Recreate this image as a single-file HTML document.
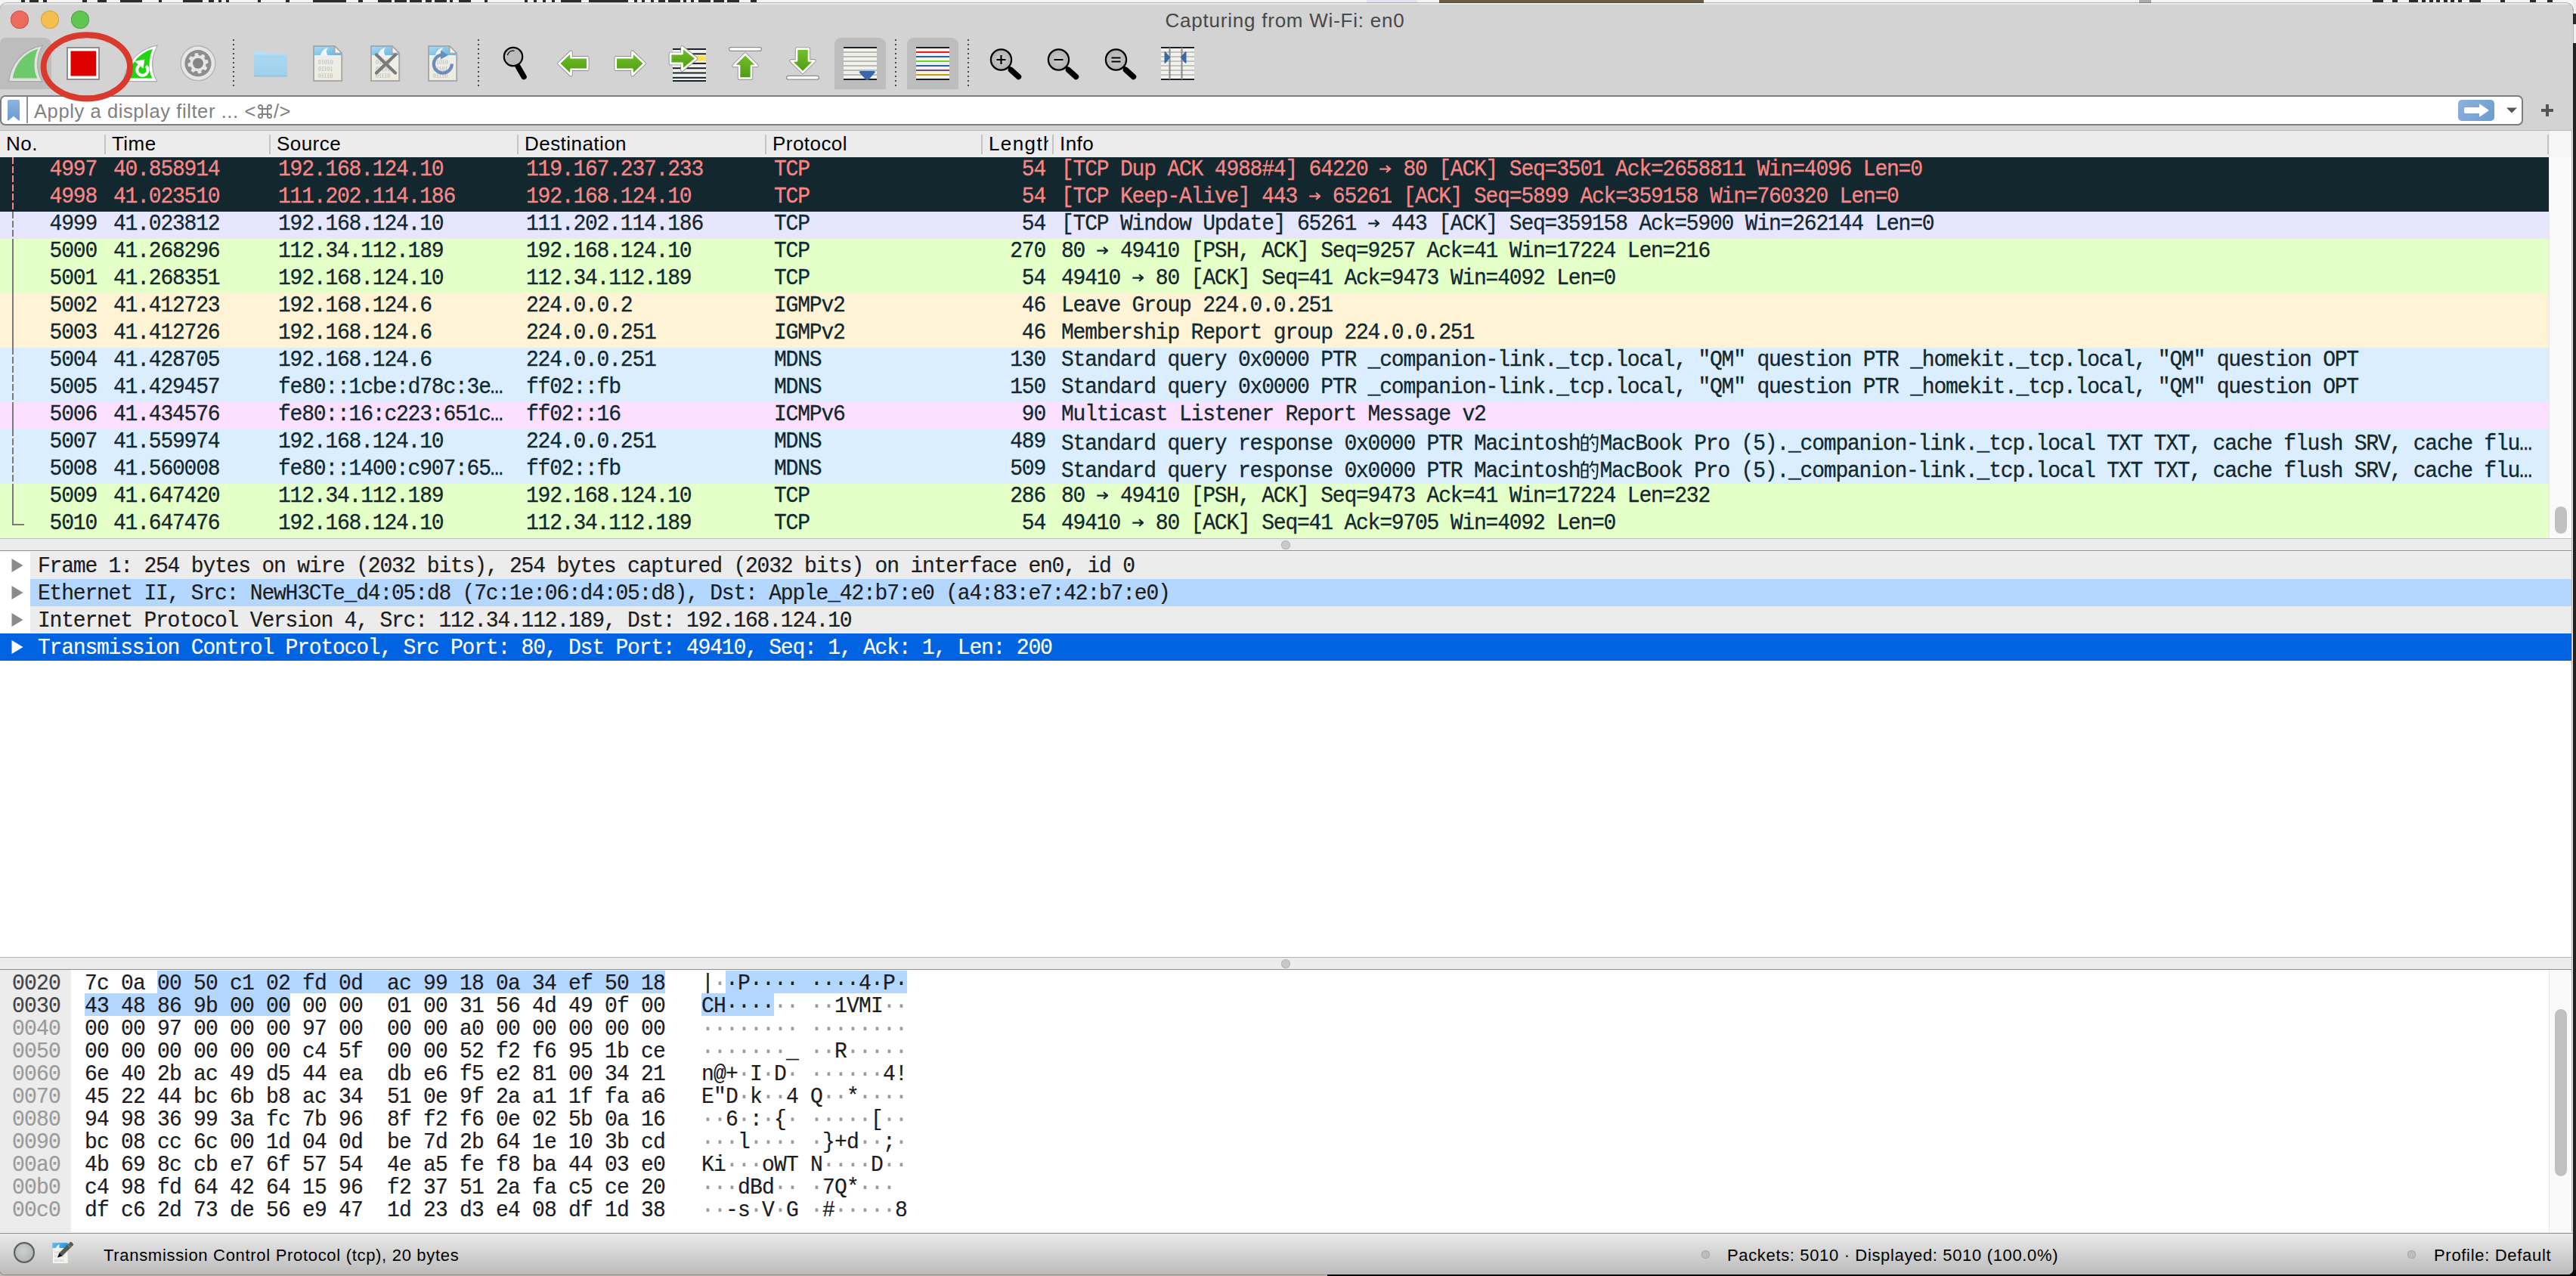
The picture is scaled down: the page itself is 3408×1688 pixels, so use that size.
<!DOCTYPE html>
<html><head><meta charset="utf-8"><title>Capturing from Wi-Fi: en0</title>
<style>
*{margin:0;padding:0;box-sizing:border-box}
html,body{width:3408px;height:1688px;overflow:hidden;background:#232323;font-family:"Liberation Sans",sans-serif}
#top{position:absolute;left:0;top:0;width:3408px;height:12px;background:#f4f4f4}
#top b{position:absolute;top:0;height:3px;background:#2a2a2a}
#rstrip{position:absolute;left:3404px;top:0;width:4px;height:57px;background:#efefef}#rstrip i{position:absolute;left:0;top:18px;width:4px;height:14px;background:#2a2a2a}
#win{position:absolute;left:0;top:4px;width:3404px;height:1682px;border-radius:9px 10px 7px 6px;background:#d3d3d3;overflow:hidden;box-shadow:0 0 0 1px rgba(0,0,0,.25)}
#win:before{content:'';position:absolute;left:0;top:0;width:100%;height:1.500px;background:#e9e9e9;z-index:9}
.pr{-webkit-text-stroke:.3px currentColor}.dr,.hr{-webkit-text-stroke:.2px currentColor}
.abs{position:absolute}
#title{position:absolute;left:-2px;width:3404px;top:7px;text-align:center;font-size:26px;line-height:32px;color:#484848;letter-spacing:.77px}
.tl{position:absolute;top:10px;width:24px;height:24px;border-radius:50%}
/* filter */
#filter{position:absolute;left:0;top:122px;width:3338px;height:40px;border:2px solid #7d7d7d;border-radius:7px;background:#fff}
#filter .ph{position:absolute;left:43px;top:4px;font-size:25.500px;line-height:30px;color:#808080;white-space:nowrap;letter-spacing:.6px}
#filter .vs{position:absolute;left:33px;top:0;width:2px;height:34.500px;background:#8f8f96}
/* header */
#hdr{position:absolute;left:0;top:168px;width:3404px;height:36px;background:#ececec;border-top:1px solid #b9b9b9}
#hdr span{position:absolute;top:2px;font-size:26px;line-height:30px;color:#000;white-space:nowrap;letter-spacing:.45px}
#hdr i{position:absolute;top:5px;width:2px;height:26px;background:#c4c4c4}
/* packet list */
#plist{position:absolute;left:0;top:0;width:3372px;height:1682px;font-family:"Liberation Mono",monospace;font-size:28px;letter-spacing:-1.203px}
.pr{position:absolute;left:0;width:3372px;height:36px;color:#12272e;white-space:pre;margin-top:-4px}
.pr .c{position:absolute;top:-.7px;height:36px;line-height:36px;transform:scaleY(1.055);transform-origin:0 25.450px}
.pr .c.low{top:2.400px}
.pr .r{text-align:right}
.bad{background:#12272e;color:#f78787}
.tcp{background:#e7e6ff}.grn{background:#e4ffc7}.igmp{background:#fff3d6}.udp{background:#daeeff}.icmp6{background:#fce0ff}
.cjk{display:inline-block;vertical-align:-4px;margin:0 0 0 0}
.arw{display:inline-block;vertical-align:2px}
.sb{position:absolute;left:3372px;width:30px;background:#fafafa;border-left:1.500px solid #e8e8e8}
.thumb{position:absolute;left:3380px;width:16px;border-radius:8px;background:#c1c1c1}
.split{position:absolute;left:0;width:3404px;height:17px;background:#ececec;border-top:1px solid #bdbdbd;border-bottom:1px solid #8e8e8e}
.split i{position:absolute;left:1695px;top:2px;width:12px;height:12px;border-radius:50%;background:#c9c9c9;box-shadow:inset 0 0 0 1px #b4b4b4}
/* details */
#det{position:absolute;left:0;top:725px;width:3402px;height:538px;background:#fff}
.dr{position:absolute;left:0;width:3402px;height:36px;margin-top:-4px;font-family:"Liberation Mono",monospace;font-size:28px;letter-spacing:-1.203px;color:#1c1c1c;white-space:pre}
.dr .bg{position:absolute;left:40px;top:0;right:0;height:36px}
.dr.g .bg{background:#ececec}.dr.b .bg{background:#b3d7ff}.dr.s .bg{left:0;background:#0063e1}
.dr.s{color:#fff}
.dr .t{position:absolute;left:50px;top:1.600px;line-height:36px;transform:scaleY(1.055);transform-origin:0 25.450px}
.dr .tri{position:absolute;left:15px;top:8px;fill:#8a8a8a}
.dr.s .tri{fill:#fff}
/* hex */
#hex{position:absolute;left:0;top:1279px;width:3372px;height:347px;background:#fff}
#hexoff{position:absolute;left:0;top:1279px;width:94px;height:347px;background:#ececec}
.hr{position:absolute;left:0;width:3373px;height:30px;margin-top:-4px;font-family:"Liberation Mono",monospace;font-size:28px;letter-spacing:-0.803px;color:#1c1c1c;white-space:pre;line-height:30px}
.hr span{position:absolute;top:2.500px;transform:scaleY(1.055);transform-origin:0 22.450px}
.hr .off{left:16px;color:#9a9a9a}.hr .off.on{color:#454545}
.hr .hx{left:112px}.hr .as{left:928px}
.hr .as i{font-style:normal;color:#9a9a9a}
.hr .hl{position:absolute;top:0;height:30px;background:#b3d7ff}
/* status */
#status{position:absolute;left:0;top:1626px;width:3404px;height:56px;border-top:1.500px solid #f2f2f2;background:linear-gradient(#8c8c8c 0,#8c8c8c 1.500px,#e9e9e9 1.500px,#dcdcdc 30%,#c4c4c4 80%,#b9b9b9)}
#status span{position:absolute;top:16.500px;font-size:22px;line-height:26px;color:#000;white-space:nowrap;letter-spacing:.69px}
#status .dot{position:absolute;top:23px;width:11px;height:11px;border-radius:50%;background:#bdbdbd;box-shadow:inset 0 0 0 1px #a8a8a8}
.tb{position:absolute;overflow:visible}
.sel{position:absolute;top:46px;height:68px;border-radius:9px 9px 0 0;background:#bdbdbd}
.sep{position:absolute;top:48px;width:2px;height:63px;background:repeating-linear-gradient(#4a4a4a 0 2px,transparent 2px 6px)}
</style></head><body>
<div id="top">
<b style="left:28px;width:5px"></b><b style="left:39px;width:12px"></b><b style="left:57px;width:5px"></b><b style="left:109px;width:6px"></b><b style="left:129px;width:12px"></b><b style="left:159px;width:29px"></b><b style="left:210px;width:4px"></b><b style="left:242px;width:26px"></b><b style="left:276px;width:7px"></b><b style="left:289px;width:4px"></b><b style="left:299px;width:4px"></b><b style="left:341px;width:4px"></b><b style="left:378px;width:5px"></b><b style="left:414px;width:44px"></b><b style="left:474px;width:6px"></b><b style="left:500px;width:18px"></b><b style="left:522px;width:16px"></b><b style="left:542px;width:16px"></b><b style="left:563px;width:8px"></b><b style="left:575px;width:16px"></b><b style="left:595px;width:4px"></b><b style="left:607px;width:16px"></b><b style="left:641px;width:4px"></b><b style="left:694px;width:4px"></b><b style="left:706px;width:4px"></b><b style="left:718px;width:4px"></b><b style="left:730px;width:4px"></b><b style="left:742px;width:27px"></b><b style="left:779px;width:52px"></b><b style="left:839px;width:4px"></b><b style="left:849px;width:4px"></b><b style="left:861px;width:4px"></b><b style="left:871px;width:9px"></b><b style="left:884px;width:16px"></b><b style="left:904px;width:4px"></b><b style="left:914px;width:4px"></b><b style="left:924px;width:16px"></b><b style="left:944px;width:14px"></b><b style="left:962px;width:16px"></b><b style="left:993px;width:8px"></b><b style="left:3139px;width:14px"></b><b style="left:3165px;width:7px"></b><b style="left:3187px;width:12px"></b><b style="left:3204px;width:5px"></b><b style="left:3214px;width:5px"></b><b style="left:3223px;width:5px"></b><b style="left:3233px;width:5px"></b><b style="left:3242px;width:5px"></b><b style="left:3252px;width:5px"></b><b style="left:3267px;width:15px"></b><b style="left:3308px;width:6px"></b><b style="left:3347px;width:8px"></b><b style="left:3370px;width:7px"></b><b style="left:1808px;width:67px;background:#e4e4f2;height:4px"></b><b style="left:1904px;width:350px;background:#6b5d45;height:4px"></b><b style="left:2830px;width:16px;background:#aaa;height:4px"></b>
</div>
<div id="rstrip"><i></i></div>
<div class="abs" style="left:0;top:1680px;width:1756px;height:8px;background:#bcbab0"></div><div class="abs" style="left:1756px;top:1680px;width:1652px;height:8px;background:#060606"></div>
<div id="win">
<div id="title">Capturing from Wi-Fi: en0</div>
<div class="tl" style="left:14px;background:#ec6a5e;box-shadow:inset 0 0 0 1px #d5524a"></div>
<div class="tl" style="left:54px;background:#f4bf4f;box-shadow:inset 0 0 0 1px #d8a13a"></div>
<div class="tl" style="left:94px;background:#61c554;box-shadow:inset 0 0 0 1px #4ba93f"></div>
<svg width="0" height="0" style="position:absolute"><defs>
<linearGradient id="gG" x1="0" y1="0" x2="0" y2="1"><stop offset="0" stop-color="#74c02c"/><stop offset="1" stop-color="#4c9c10"/></linearGradient>
<linearGradient id="gB" x1="0" y1="0" x2="1" y2="1"><stop offset="0" stop-color="#a9d9f1"/><stop offset="1" stop-color="#63b3e0"/></linearGradient>
<linearGradient id="gP" x1="0" y1="0" x2="0" y2="1"><stop offset="0" stop-color="#f0f0f0"/><stop offset="1" stop-color="#ecebde"/></linearGradient>
<radialGradient id="gL" cx=".5" cy=".5" r=".6"><stop offset="0" stop-color="#cfcfcf"/><stop offset="1" stop-color="#a9a9a9"/></radialGradient>
<linearGradient id="gF" x1="0" y1="0" x2="0" y2="1"><stop offset="0" stop-color="#a9d7f0"/><stop offset="1" stop-color="#9fd0ec"/></linearGradient>
</defs></svg>
<div class="sel" style="left:0;width:68px;border-radius:7px 9px 0 0"></div>
<div class="sel" style="left:1104px;width:68px"></div>
<div class="sel" style="left:1200px;width:68px"></div>
<div class="sep" style="left:308px"></div>
<div class="sep" style="left:632px"></div>
<div class="sep" style="left:1184px"></div>
<div class="sep" style="left:1280px"></div>
<svg class="tb" style="left:10px;top:56px" width="48" height="48" viewBox="0 0 48 48"><path d="M1.600 47.700 C4 26 19 5 46.400 .1 C38.500 14 36.500 33 46 47.700Z" fill="#e2e2e2" stroke="#a9a9a9" stroke-width="1.200"/><path d="M6.900 43.500 C9.500 26 21 10.500 40 4.700 C35 16 33.500 32 39.400 43.500Z" fill="#6dc96a"/></svg>
<svg class="tb" style="left:86px;top:56px" width="48" height="48" viewBox="0 0 48 48"><rect x="3" y="3" width="42" height="42" fill="#fff" stroke="#8f8f8f" stroke-width="2"/><rect x="7.500" y="7.500" width="33.500" height="33" fill="#dc0000"/></svg>
<svg class="tb" style="left:162px;top:56px" width="48" height="48" viewBox="0 0 48 48"><path d="M1.600 47.700 C4 26 19 5 46.400 .1 C38.500 14 36.500 33 46 47.700Z" fill="#fff" stroke="#9a9a9a" stroke-width="1"/><path d="M6.900 43.500 C9.500 26 21 10.500 40 4.700 C35 16 33.500 32 39.400 43.500Z" fill="#1fd611"/><path d="M31.200 27.150A7.200 7.200 0 1 1 22.270 26.600" fill="none" stroke="#fff" stroke-width="4"/><path d="M15.900 20.900 29.300 18.400 27.500 30.800Z" fill="#fff"/></svg>
<svg class="tb" style="left:238px;top:56px" width="48" height="48" viewBox="0 0 48 48"><circle cx="24" cy="23.700" r="22.900" fill="#e6e6e6" stroke="#b4b4b4" stroke-width="1.400"/><circle cx="24" cy="23.700" r="17.600" fill="#8d8d8d"/><path d="M36.98 19.33 37.70 23.36 34.56 24.60 33.95 27.34 36.27 29.79 33.92 33.15 30.83 31.81 28.46 33.31 28.37 36.68 24.34 37.40 23.10 34.26 20.36 33.65 17.91 35.97 14.55 33.62 15.89 30.53 14.39 28.16 11.02 28.07 10.30 24.04 13.44 22.80 14.05 20.06 11.73 17.61 14.08 14.25 17.17 15.59 19.54 14.09 19.63 10.72 23.66 10.00 24.90 13.14 27.64 13.75 30.09 11.43 33.45 13.78 32.11 16.87 33.61 19.24Z" fill="#e6e6e6"/><circle cx="24" cy="23.700" r="7" fill="#868686"/></svg>
<svg class="tb" style="left:334px;top:55.5px" width="48" height="48" viewBox="0 0 48 48"><path d="M2 9.500q0-2 2-2h11q1.500 0 2 1.500l.8 1.500H44q2 0 2 2V39q0 2-2 2H4q-2 0-2-2z" fill="#b7def3"/><path d="M2 14.500q0-2 2-2h40q2 0 2 2V39.500q0 2-2 2H4q-2 0-2-2z" fill="url(#gF)"/><path d="M2 40.500h44" stroke="#8fc1de" stroke-width="1.500"/></svg>
<svg class="tb" style="left:410px;top:56px" width="48" height="48" viewBox="0 0 48 48"><path d="M5 1H32.800L42.200 10.400V47H5Z" fill="url(#gP)" stroke="#a9a9a9" stroke-width="2" stroke-linejoin="miter"/><path d="M6 2H32.400L41.200 10.800V13H6Z" fill="url(#gB)"/><path d="M14 13C15 8 19 4 24 3 C21.500 6 21.500 10 23.500 13Z" fill="#eef6fb"/><path d="M32.800 1V10.400H42.200Z" fill="#f4f4f2" stroke="#a9a9a9" stroke-width="1.500" stroke-linejoin="round"/><g font-family="Liberation Serif,serif" font-size="7.500" fill="#b2b2b2" letter-spacing=".2"><text x="11" y="24.500">01010</text><text x="11" y="33.500">01101</text><text x="11" y="42.500">01110</text></g></svg>
<svg class="tb" style="left:486px;top:56px" width="48" height="48" viewBox="0 0 48 48"><path d="M5 1H32.800L42.200 10.400V47H5Z" fill="url(#gP)" stroke="#a9a9a9" stroke-width="2" stroke-linejoin="miter"/><path d="M6 2H32.400L41.200 10.800V13H6Z" fill="url(#gB)"/><path d="M14 13C15 8 19 4 24 3 C21.500 6 21.500 10 23.500 13Z" fill="#eef6fb"/><path d="M32.800 1V10.400H42.200Z" fill="#f4f4f2" stroke="#a9a9a9" stroke-width="1.500" stroke-linejoin="round"/><g font-family="Liberation Serif,serif" font-size="7.500" fill="#b2b2b2" letter-spacing=".2"><text x="11" y="24.500">01010</text><text x="11" y="33.500">01101</text><text x="11" y="42.500">01110</text></g><path d="M12 12.500 37 36.500M37 12.500 12 36.500" stroke="#7a7a7a" stroke-width="4.200" stroke-linecap="round"/></svg>
<svg class="tb" style="left:562px;top:56px" width="48" height="48" viewBox="0 0 48 48"><path d="M5 1H32.800L42.200 10.400V47H5Z" fill="url(#gP)" stroke="#a9a9a9" stroke-width="2" stroke-linejoin="miter"/><path d="M6 2H32.400L41.200 10.800V13H6Z" fill="url(#gB)"/><path d="M14 13C15 8 19 4 24 3 C21.500 6 21.500 10 23.500 13Z" fill="#eef6fb"/><path d="M32.800 1V10.400H42.200Z" fill="#f4f4f2" stroke="#a9a9a9" stroke-width="1.500" stroke-linejoin="round"/><g font-family="Liberation Serif,serif" font-size="7.500" fill="#b2b2b2" letter-spacing=".2"><text x="11" y="24.500">01010</text><text x="11" y="33.500">01101</text><text x="11" y="42.500">01110</text></g><path d="M35.800 24.500A12 12 0 1 1 22 12.700" fill="none" stroke="#6c8cbd" stroke-width="4.200"/><path d="M21 6.500 31 13 21 18.500Z" fill="#6c8cbd"/></svg>
<svg class="tb" style="left:658px;top:56px" width="48" height="48" viewBox="0 0 48 48"><circle cx="21" cy="15" r="12.200" fill="#bcbcbc" stroke="#000" stroke-width="2.200"/><path d="M13.500 12.500A8 8 0 0 1 22 7.200" fill="none" stroke="#000" stroke-width="1.300" stroke-linecap="round"/><path d="M27.500 28.500 35 41.500" stroke="#000" stroke-width="7.500" stroke-linecap="round"/><path d="M25.500 25 28 29.500" stroke="#000" stroke-width="3.500"/></svg>
<svg class="tb" style="left:734px;top:56px" width="48" height="48" viewBox="0 0 48 48"><g><path d="M5.500 24 21.500 8.700V16.200H43.300V31.800H21.500V39.300Z" fill="#fff" stroke="#8d8d8d" stroke-width="4.400" stroke-linejoin="round"/><path d="M5.500 24 21.500 8.700V16.200H43.300V31.800H21.500V39.300Z" fill="url(#gG)" stroke="#fff" stroke-width="2.600" stroke-linejoin="round"/></g></svg>
<svg class="tb" style="left:810px;top:56px" width="48" height="48" viewBox="0 0 48 48"><g transform="translate(48 0) scale(-1 1)"><path d="M5.500 24 21.500 8.700V16.200H43.300V31.800H21.500V39.300Z" fill="#fff" stroke="#8d8d8d" stroke-width="4.400" stroke-linejoin="round"/><path d="M5.500 24 21.500 8.700V16.200H43.300V31.800H21.500V39.300Z" fill="url(#gG)" stroke="#fff" stroke-width="2.600" stroke-linejoin="round"/></g></svg>
<svg class="tb" style="left:888px;top:56px" width="48" height="48" viewBox="0 0 48 48"><rect x="2" y="4" width="44" height="44" fill="#f1f1ec"/><rect x="2" y="4" width="44" height="2" fill="#17222a"/><rect x="2" y="10.3" width="44" height="2" fill="#17222a"/><rect x="2" y="16.6" width="44" height="2" fill="#17222a"/><rect x="2" y="22.9" width="44" height="2" fill="#17222a"/><rect x="2" y="29.2" width="44" height="2" fill="#17222a"/><rect x="2" y="35.5" width="44" height="2" fill="#17222a"/><rect x="2" y="41.8" width="44" height="2" fill="#17222a"/><rect x="2" y="46" width="44" height="2" fill="#17222a"/><rect x="30" y="14" width="16" height="6.500" fill="#fbe14f"/><path d="M-1 11H14.500V2.500L33 17.500 14.500 32.500V24H-1Z" fill="#fff" stroke="#8d8d8d" stroke-width="4.600" stroke-linejoin="round"/><path d="M-1 11H14.500V2.500L33 17.500 14.500 32.500V24H-1Z" fill="url(#gG)" stroke="#fff" stroke-width="2.800" stroke-linejoin="round"/></svg>
<svg class="tb" style="left:962px;top:56px" width="48" height="48" viewBox="0 0 48 48"><rect x="2.600" y="2.600" width="42.800" height="4.800" rx="2.400" fill="#fff" stroke="#8d8d8d" stroke-width="1.200"/><path d="M24 11.500 39.500 27H32V43.500H16V27H8.500Z" fill="#fff" stroke="#8d8d8d" stroke-width="4.400" stroke-linejoin="round"/><path d="M24 11.500 39.500 27H32V43.500H16V27H8.500Z" fill="url(#gG)" stroke="#fff" stroke-width="2.600" stroke-linejoin="round"/></svg>
<svg class="tb" style="left:1038px;top:56px" width="48" height="48" viewBox="0 0 48 48"><rect x="2.600" y="40.400" width="42.800" height="4.800" rx="2.400" fill="#fff" stroke="#8d8d8d" stroke-width="1.200"/><path d="M24 35.700 8.500 20.500H16V4.600H32V20.500H39.500Z" fill="#fff" stroke="#8d8d8d" stroke-width="4.400" stroke-linejoin="round"/><path d="M24 35.700 8.500 20.500H16V4.600H32V20.500H39.500Z" fill="url(#gG)" stroke="#fff" stroke-width="2.600" stroke-linejoin="round"/></svg>
<svg class="tb" style="left:1114px;top:56px" width="48" height="48" viewBox="0 0 48 48"><rect x="2" y="2" width="44" height="44" fill="#f1f1ee"/><rect x="2" y="2" width="44" height="2" fill="#17222a"/><rect x="2" y="44" width="44" height="2" fill="#17222a"/><rect x="2" y="8" width="44" height="2" fill="#b9bab2"/><rect x="2" y="14" width="44" height="2" fill="#b9bab2"/><rect x="2" y="20" width="44" height="2" fill="#b9bab2"/><rect x="2" y="26" width="44" height="2" fill="#b9bab2"/><rect x="2" y="32" width="44" height="2" fill="#b9bab2"/><rect x="2" y="38" width="44" height="2" fill="#b9bab2"/><path d="M22.500 35.500q0-1.500 2-1.500h17.500q2 0 2 1.500l-9 10q-1.700 1.500-3.400 0z" fill="#3868a9"/></svg>
<svg class="tb" style="left:1210px;top:56px" width="48" height="48" viewBox="0 0 48 48"><rect x="2" y="2" width="44" height="44" fill="#f1f1ee"/><rect x="2" y="2" width="44" height="2" fill="#17222a"/><rect x="2" y="44" width="44" height="2" fill="#17222a"/><rect x="2" y="8" width="44" height="2" fill="#ee1c1c"/><rect x="2" y="14" width="44" height="2" fill="#2a5db0"/><rect x="2" y="20" width="44" height="2" fill="#6cd41a"/><rect x="2" y="26" width="44" height="2" fill="#2a5db0"/><rect x="2" y="32" width="44" height="2" fill="#76477f"/><rect x="2" y="38" width="44" height="2" fill="#c4a000"/></svg>
<svg class="tb" style="left:1308px;top:56px" width="48" height="48" viewBox="0 0 48 48"><circle cx="16.500" cy="19" r="13.600" fill="url(#gL)" stroke="#000" stroke-width="2.200"/><path d="M10.500 19h12M16.500 13v12" stroke="#000" stroke-width="2.200"/><path d="M29.500 32.500 39.500 41.500" stroke="#000" stroke-width="7.500" stroke-linecap="round"/><path d="M26 28 30 32.500" stroke="#000" stroke-width="3.500"/></svg>
<svg class="tb" style="left:1384px;top:56px" width="48" height="48" viewBox="0 0 48 48"><circle cx="16.500" cy="19" r="13.600" fill="url(#gL)" stroke="#000" stroke-width="2.200"/><path d="M10.500 19h12" stroke="#000" stroke-width="2.200"/><path d="M29.500 32.500 39.500 41.500" stroke="#000" stroke-width="7.500" stroke-linecap="round"/><path d="M26 28 30 32.500" stroke="#000" stroke-width="3.500"/></svg>
<svg class="tb" style="left:1460px;top:56px" width="48" height="48" viewBox="0 0 48 48"><circle cx="16.500" cy="19" r="13.600" fill="url(#gL)" stroke="#000" stroke-width="2.200"/><path d="M10.500 16.500h12M10.500 21.500h12" stroke="#000" stroke-width="2.200"/><path d="M29.500 32.500 39.500 41.500" stroke="#000" stroke-width="7.500" stroke-linecap="round"/><path d="M26 28 30 32.500" stroke="#000" stroke-width="3.500"/></svg>
<svg class="tb" style="left:1534px;top:56px" width="48" height="48" viewBox="0 0 48 48"><rect x="2" y="2" width="44" height="44" fill="#f1f1ee"/><rect x="2" y="8" width="44" height="2" fill="#c3c4bc"/><rect x="2" y="14" width="44" height="2" fill="#c3c4bc"/><rect x="2" y="20" width="44" height="2" fill="#c3c4bc"/><rect x="2" y="26" width="44" height="2" fill="#c3c4bc"/><rect x="2" y="32" width="44" height="2" fill="#c3c4bc"/><rect x="2" y="38" width="44" height="2" fill="#c3c4bc"/><rect x="2" y="2" width="44" height="2" fill="#17222a"/><rect x="2" y="44" width="44" height="2" fill="#17222a"/><rect x="12.500" y="3" width="2" height="42" fill="#8a8b84"/><rect x="28.500" y="3" width="2" height="42" fill="#8a8b84"/><path d="M6.500 9.500q0-2 1.500-1l5.500 6.500q.8 1 0 2L8 23.500q-1.500 1-1.500-1z" fill="#3868a9"/><path d="M35.500 9.500q0-2-1.500-1l-5.500 6.500q-.8 1 0 2L34 23.500q1.500 1 1.500-1z" fill="#3868a9"/></svg>
<svg class="tb" style="left:50px;top:36px;z-index:5" width="130" height="100" viewBox="0 0 130 100"><ellipse cx="64.800" cy="48.300" rx="57.200" ry="42.100" fill="none" stroke="#d93a2b" stroke-width="8"/></svg>
<div id="filter"><svg class="abs" style="left:7px;top:3px" width="18" height="30" viewBox="0 0 18 30"><defs><linearGradient id="bk" x1="0" y1="0" x2="0" y2="1"><stop offset="0" stop-color="#8fb3de"/><stop offset="1" stop-color="#6a9bd2"/></linearGradient></defs><path d="M1 2.500q0-1.500 1.500-1.500h13q1.500 0 1.500 1.500v25q0 1.800-1.400.7l-6.600-5.400-6.600 5.400q-1.400 1.100-1.400-.7z" fill="url(#bk)"/></svg><div class="vs"></div><div class="ph">Apply a display filter ... &lt;<svg style="display:inline-block;vertical-align:-2px;margin:0 1px" width="21" height="21" viewBox="0 0 21 21"><path d="M7 7V4.500A2.500 2.500 0 1 0 4.500 7H16.500A2.500 2.500 0 1 0 14 4.500V16.500A2.500 2.500 0 1 0 16.500 14H4.500A2.500 2.500 0 1 0 7 16.500Z" fill="none" stroke="#808080" stroke-width="1.900"/></svg>/&gt;</div>
<div class="abs" style="left:3250px;top:4px;width:48px;height:28px;border-radius:5px;background:linear-gradient(135deg,#8db2dc,#6c9bd0)"><svg class="abs" style="left:7px;top:5px" width="34" height="18" viewBox="0 0 34 18"><path d="M3 5h18V1.500q0-1.500 1.300-.6L33 8.300q1 .7 0 1.400L22.300 17.100q-1.300.9-1.300-.6V13H3q-2 0-2-2V7q0-2 2-2z" fill="#fff"/></svg></div>
<svg class="abs" style="left:3314px;top:14px" width="14" height="8" viewBox="0 0 14 8"><path d="M0 .5h14l-7 7z" fill="#555"/></svg>
</div>
<svg class="abs" style="left:3362px;top:134px" width="16" height="16" viewBox="0 0 16 16"><path d="M6 0h4v6h6v4h-6v6H6v-6H0V6h6z" fill="#555"/></svg>
<div id="hdr"><span style="left:8px">No.</span><i style="left:138px"></i><span style="left:148px">Time</span><i style="left:356px"></i><span style="left:366px">Source</span><i style="left:684px"></i><span style="left:694px">Destination</span><i style="left:1012px"></i><span style="left:1022px">Protocol</span><i style="left:1298px"></i><span style="left:1308px;width:79px;overflow:hidden;letter-spacing:1.400px">Length</span><i style="left:1392px"></i><span style="left:1402px">Info</span><i style="left:3370px"></i><div class="abs" style="left:3373px;top:0;width:31px;height:35px;background:#f6f6f6"></div></div>
<div id="plist">
<div class="pr bad" style="top:208px"><span class="c r" style="left:0;width:128px">4997</span><span class="c" style="left:150px">40.858914</span><span class="c" style="left:368px">192.168.124.10</span><span class="c" style="left:696px">119.167.237.233</span><span class="c" style="left:1024px">TCP</span><span class="c r" style="left:1283px;width:100px">54</span><span class="c" style="left:1404px">[TCP Dup ACK 4988#4] 64220 <svg class="arw" width="15.6" height="12" viewBox="0 0 15.6 12"><path d="M.3 6H13.500M9 1.800 14.200 6 9 10.200" fill="none" stroke="currentColor" stroke-width="2.100"/></svg> 80 [ACK] Seq=3501 Ack=2658811 Win=4096 Len=0</span></div>
<div class="pr bad" style="top:244px"><span class="c r" style="left:0;width:128px">4998</span><span class="c" style="left:150px">41.023510</span><span class="c" style="left:368px">111.202.114.186</span><span class="c" style="left:696px">192.168.124.10</span><span class="c" style="left:1024px">TCP</span><span class="c r" style="left:1283px;width:100px">54</span><span class="c" style="left:1404px">[TCP Keep-Alive] 443 <svg class="arw" width="15.6" height="12" viewBox="0 0 15.6 12"><path d="M.3 6H13.500M9 1.800 14.200 6 9 10.200" fill="none" stroke="currentColor" stroke-width="2.100"/></svg> 65261 [ACK] Seq=5899 Ack=359158 Win=760320 Len=0</span></div>
<div class="pr tcp" style="top:280px"><span class="c r" style="left:0;width:128px">4999</span><span class="c" style="left:150px">41.023812</span><span class="c" style="left:368px">192.168.124.10</span><span class="c" style="left:696px">111.202.114.186</span><span class="c" style="left:1024px">TCP</span><span class="c r" style="left:1283px;width:100px">54</span><span class="c" style="left:1404px">[TCP Window Update] 65261 <svg class="arw" width="15.6" height="12" viewBox="0 0 15.6 12"><path d="M.3 6H13.500M9 1.800 14.200 6 9 10.200" fill="none" stroke="currentColor" stroke-width="2.100"/></svg> 443 [ACK] Seq=359158 Ack=5900 Win=262144 Len=0</span></div>
<div class="pr grn" style="top:316px"><span class="c r" style="left:0;width:128px">5000</span><span class="c" style="left:150px">41.268296</span><span class="c" style="left:368px">112.34.112.189</span><span class="c" style="left:696px">192.168.124.10</span><span class="c" style="left:1024px">TCP</span><span class="c r" style="left:1283px;width:100px">270</span><span class="c" style="left:1404px">80 <svg class="arw" width="15.6" height="12" viewBox="0 0 15.6 12"><path d="M.3 6H13.500M9 1.800 14.200 6 9 10.200" fill="none" stroke="currentColor" stroke-width="2.100"/></svg> 49410 [PSH, ACK] Seq=9257 Ack=41 Win=17224 Len=216</span></div>
<div class="pr grn" style="top:352px"><span class="c r" style="left:0;width:128px">5001</span><span class="c" style="left:150px">41.268351</span><span class="c" style="left:368px">192.168.124.10</span><span class="c" style="left:696px">112.34.112.189</span><span class="c" style="left:1024px">TCP</span><span class="c r" style="left:1283px;width:100px">54</span><span class="c" style="left:1404px">49410 <svg class="arw" width="15.6" height="12" viewBox="0 0 15.6 12"><path d="M.3 6H13.500M9 1.800 14.200 6 9 10.200" fill="none" stroke="currentColor" stroke-width="2.100"/></svg> 80 [ACK] Seq=41 Ack=9473 Win=4092 Len=0</span></div>
<div class="pr igmp" style="top:388px"><span class="c r" style="left:0;width:128px">5002</span><span class="c" style="left:150px">41.412723</span><span class="c" style="left:368px">192.168.124.6</span><span class="c" style="left:696px">224.0.0.2</span><span class="c" style="left:1024px">IGMPv2</span><span class="c r" style="left:1283px;width:100px">46</span><span class="c" style="left:1404px">Leave Group 224.0.0.251</span></div>
<div class="pr igmp" style="top:424px"><span class="c r" style="left:0;width:128px">5003</span><span class="c" style="left:150px">41.412726</span><span class="c" style="left:368px">192.168.124.6</span><span class="c" style="left:696px">224.0.0.251</span><span class="c" style="left:1024px">IGMPv2</span><span class="c r" style="left:1283px;width:100px">46</span><span class="c" style="left:1404px">Membership Report group 224.0.0.251</span></div>
<div class="pr udp" style="top:460px"><span class="c r" style="left:0;width:128px">5004</span><span class="c" style="left:150px">41.428705</span><span class="c" style="left:368px">192.168.124.6</span><span class="c" style="left:696px">224.0.0.251</span><span class="c" style="left:1024px">MDNS</span><span class="c r" style="left:1283px;width:100px">130</span><span class="c" style="left:1404px">Standard query 0x0000 PTR _companion-link._tcp.local, "QM" question PTR _homekit._tcp.local, "QM" question OPT</span></div>
<div class="pr udp" style="top:496px"><span class="c r" style="left:0;width:128px">5005</span><span class="c" style="left:150px">41.429457</span><span class="c" style="left:368px">fe80::1cbe:d78c:3e…</span><span class="c" style="left:696px">ff02::fb</span><span class="c" style="left:1024px">MDNS</span><span class="c r" style="left:1283px;width:100px">150</span><span class="c" style="left:1404px">Standard query 0x0000 PTR _companion-link._tcp.local, "QM" question PTR _homekit._tcp.local, "QM" question OPT</span></div>
<div class="pr icmp6" style="top:532px"><span class="c r" style="left:0;width:128px">5006</span><span class="c" style="left:150px">41.434576</span><span class="c" style="left:368px">fe80::16:c223:651c…</span><span class="c" style="left:696px">ff02::16</span><span class="c" style="left:1024px">ICMPv6</span><span class="c r" style="left:1283px;width:100px">90</span><span class="c" style="left:1404px">Multicast Listener Report Message v2</span></div>
<div class="pr udp" style="top:568px"><span class="c r" style="left:0;width:128px">5007</span><span class="c" style="left:150px">41.559974</span><span class="c" style="left:368px">192.168.124.10</span><span class="c" style="left:696px">224.0.0.251</span><span class="c" style="left:1024px">MDNS</span><span class="c r" style="left:1283px;width:100px">489</span><span class="c low" style="left:1404px">Standard query response 0x0000 PTR Macintosh<svg class="cjk" width="26" height="26" viewBox="0 0 26 26"><g fill="none" stroke="currentColor" stroke-width="2"><path d="M6 2 4.5 6M2.5 6.500h8v16h-8zM2.500 14h8M17 2q-1 5-4 8M15.500 6.500h8q0 16-2 17.500-1 .8-4-.5M16 12l3 4"/></g></svg>MacBook Pro (5)._companion-link._tcp.local TXT TXT, cache flush SRV, cache flu…</span></div>
<div class="pr udp" style="top:604px"><span class="c r" style="left:0;width:128px">5008</span><span class="c" style="left:150px">41.560008</span><span class="c" style="left:368px">fe80::1400:c907:65…</span><span class="c" style="left:696px">ff02::fb</span><span class="c" style="left:1024px">MDNS</span><span class="c r" style="left:1283px;width:100px">509</span><span class="c low" style="left:1404px">Standard query response 0x0000 PTR Macintosh<svg class="cjk" width="26" height="26" viewBox="0 0 26 26"><g fill="none" stroke="currentColor" stroke-width="2"><path d="M6 2 4.5 6M2.5 6.500h8v16h-8zM2.500 14h8M17 2q-1 5-4 8M15.500 6.500h8q0 16-2 17.500-1 .8-4-.5M16 12l3 4"/></g></svg>MacBook Pro (5)._companion-link._tcp.local TXT TXT, cache flush SRV, cache flu…</span></div>
<div class="pr grn" style="top:640px"><span class="c r" style="left:0;width:128px">5009</span><span class="c" style="left:150px">41.647420</span><span class="c" style="left:368px">112.34.112.189</span><span class="c" style="left:696px">192.168.124.10</span><span class="c" style="left:1024px">TCP</span><span class="c r" style="left:1283px;width:100px">286</span><span class="c" style="left:1404px">80 <svg class="arw" width="15.6" height="12" viewBox="0 0 15.6 12"><path d="M.3 6H13.500M9 1.800 14.200 6 9 10.200" fill="none" stroke="currentColor" stroke-width="2.100"/></svg> 49410 [PSH, ACK] Seq=9473 Ack=41 Win=17224 Len=232</span></div>
<div class="pr grn" style="top:676px"><span class="c r" style="left:0;width:128px">5010</span><span class="c" style="left:150px">41.647476</span><span class="c" style="left:368px">192.168.124.10</span><span class="c" style="left:696px">112.34.112.189</span><span class="c" style="left:1024px">TCP</span><span class="c r" style="left:1283px;width:100px">54</span><span class="c" style="left:1404px">49410 <svg class="arw" width="15.6" height="12" viewBox="0 0 15.6 12"><path d="M.3 6H13.500M9 1.800 14.200 6 9 10.200" fill="none" stroke="currentColor" stroke-width="2.100"/></svg> 80 [ACK] Seq=41 Ack=9705 Win=4092 Len=0</span></div>
</div>
<svg class="abs" style="left:12px;top:204px" width="24" height="504" viewBox="0 0 24 504"><g fill="none" stroke-width="2"><path d="M5 0V72" stroke="#f78787" stroke-dasharray="9 3"/><path d="M5 72V108" stroke="#7a7a7a" stroke-dasharray="9 3"/><path d="M5 108V252" stroke="#7a7a7a"/><path d="M5 252V324" stroke="#7a7a7a" stroke-dasharray="9 3"/><path d="M5 324V360" stroke="#7a7a7a"/><path d="M5 360V432" stroke="#7a7a7a" stroke-dasharray="9 3"/><path d="M5 432V486H20" stroke="#7a7a7a"/></g></svg>
<div class="sb" style="top:204px;height:504px"></div><div class="thumb" style="top:666px;height:36px"></div>
<div class="split" style="top:708px"><i></i></div>
<div id="det">
</div>
<div class="dr g" style="top:730px"><div class="bg"></div><svg class="tri" width="16" height="20" viewBox="0 0 16 20"><path d="M0.500 1 15.500 10 0.500 19z"/></svg><span class="t">Frame 1: 254 bytes on wire (2032 bits), 254 bytes captured (2032 bits) on interface en0, id 0</span></div>
<div class="dr b" style="top:766px"><div class="bg"></div><svg class="tri" width="16" height="20" viewBox="0 0 16 20"><path d="M0.500 1 15.500 10 0.500 19z"/></svg><span class="t">Ethernet II, Src: NewH3CTe_d4:05:d8 (7c:1e:06:d4:05:d8), Dst: Apple_42:b7:e0 (a4:83:e7:42:b7:e0)</span></div>
<div class="dr g" style="top:802px"><div class="bg"></div><svg class="tri" width="16" height="20" viewBox="0 0 16 20"><path d="M0.500 1 15.500 10 0.500 19z"/></svg><span class="t">Internet Protocol Version 4, Src: 112.34.112.189, Dst: 192.168.124.10</span></div>
<div class="dr s" style="top:838px"><div class="bg"></div><svg class="tri" width="16" height="20" viewBox="0 0 16 20"><path d="M0.500 1 15.500 10 0.500 19z"/></svg><span class="t">Transmission Control Protocol, Src Port: 80, Dst Port: 49410, Seq: 1, Ack: 1, Len: 200</span></div>
<div class="split" style="top:1262px;border-top-color:#b4b4b4"><i></i></div>
<div id="hex"></div><div id="hexoff"></div>
<div class="hr" style="top:1284px"><div class="hl" style="left:208px;width:672px"></div><div class="hl" style="left:960px;width:240px"></div><span class="off on">0020</span><span class="hx">7c 0a 00 50 c1 02 fd 0d  ac 99 18 0a 34 ef 50 18</span><span class="as">|<i>·</i>·P···· ····4·P·</span></div>
<div class="hr" style="top:1314px"><div class="hl" style="left:112px;width:272px"></div><div class="hl" style="left:928px;width:96px"></div><span class="off on">0030</span><span class="hx">43 48 86 9b 00 00 00 00  01 00 31 56 4d 49 0f 00</span><span class="as">CH····<i>·</i><i>·</i> <i>·</i><i>·</i>1VMI<i>·</i><i>·</i></span></div>
<div class="hr" style="top:1344px"><span class="off">0040</span><span class="hx">00 00 97 00 00 00 97 00  00 00 a0 00 00 00 00 00</span><span class="as"><i>·</i><i>·</i><i>·</i><i>·</i><i>·</i><i>·</i><i>·</i><i>·</i> <i>·</i><i>·</i><i>·</i><i>·</i><i>·</i><i>·</i><i>·</i><i>·</i></span></div>
<div class="hr" style="top:1374px"><span class="off">0050</span><span class="hx">00 00 00 00 00 00 c4 5f  00 00 52 f2 f6 95 1b ce</span><span class="as"><i>·</i><i>·</i><i>·</i><i>·</i><i>·</i><i>·</i><i>·</i>_ <i>·</i><i>·</i>R<i>·</i><i>·</i><i>·</i><i>·</i><i>·</i></span></div>
<div class="hr" style="top:1404px"><span class="off">0060</span><span class="hx">6e 40 2b ac 49 d5 44 ea  db e6 f5 e2 81 00 34 21</span><span class="as">n@+<i>·</i>I<i>·</i>D<i>·</i> <i>·</i><i>·</i><i>·</i><i>·</i><i>·</i><i>·</i>4!</span></div>
<div class="hr" style="top:1434px"><span class="off">0070</span><span class="hx">45 22 44 bc 6b b8 ac 34  51 0e 9f 2a a1 1f fa a6</span><span class="as">E"D<i>·</i>k<i>·</i><i>·</i>4 Q<i>·</i><i>·</i>*<i>·</i><i>·</i><i>·</i><i>·</i></span></div>
<div class="hr" style="top:1464px"><span class="off">0080</span><span class="hx">94 98 36 99 3a fc 7b 96  8f f2 f6 0e 02 5b 0a 16</span><span class="as"><i>·</i><i>·</i>6<i>·</i>:<i>·</i>{<i>·</i> <i>·</i><i>·</i><i>·</i><i>·</i><i>·</i>[<i>·</i><i>·</i></span></div>
<div class="hr" style="top:1494px"><span class="off">0090</span><span class="hx">bc 08 cc 6c 00 1d 04 0d  be 7d 2b 64 1e 10 3b cd</span><span class="as"><i>·</i><i>·</i><i>·</i>l<i>·</i><i>·</i><i>·</i><i>·</i> <i>·</i>}+d<i>·</i><i>·</i>;<i>·</i></span></div>
<div class="hr" style="top:1524px"><span class="off">00a0</span><span class="hx">4b 69 8c cb e7 6f 57 54  4e a5 fe f8 ba 44 03 e0</span><span class="as">Ki<i>·</i><i>·</i><i>·</i>oWT N<i>·</i><i>·</i><i>·</i><i>·</i>D<i>·</i><i>·</i></span></div>
<div class="hr" style="top:1554px"><span class="off">00b0</span><span class="hx">c4 98 fd 64 42 64 15 96  f2 37 51 2a fa c5 ce 20</span><span class="as"><i>·</i><i>·</i><i>·</i>dBd<i>·</i><i>·</i> <i>·</i>7Q*<i>·</i><i>·</i><i>·</i> </span></div>
<div class="hr" style="top:1584px"><span class="off">00c0</span><span class="hx">df c6 2d 73 de 56 e9 47  1d 23 d3 e4 08 df 1d 38</span><span class="as"><i>·</i><i>·</i>-s<i>·</i>V<i>·</i>G <i>·</i>#<i>·</i><i>·</i><i>·</i><i>·</i><i>·</i>8</span></div>
<div class="sb" style="top:1279px;height:347px"></div><div class="thumb" style="top:1331px;height:221px"></div>
<div class="abs" style="left:3402px;top:168px;width:2px;height:1460px;background:#ececec;border-left:1px solid #b6b6b6"></div>
<div id="status"><svg class="abs" style="left:17px;top:11.400px" width="30" height="30" viewBox="0 0 30 30"><defs><radialGradient id="gS" cx=".45" cy=".4" r=".65"><stop offset="0" stop-color="#cdd0cd"/><stop offset="1" stop-color="#b0b3b0"/></radialGradient></defs><circle cx="15" cy="15" r="12.900" fill="url(#gS)" stroke="#5b6063" stroke-width="2.200"/></svg><svg class="abs" style="left:68px;top:9.500px;overflow:visible" width="32" height="32" viewBox="0 0 32 32"><defs><linearGradient id="gE" x1="0" y1="0" x2="1" y2="0"><stop offset="0" stop-color="#63b7e8"/><stop offset="1" stop-color="#1c97dc"/></linearGradient></defs><path d="M1.400 3.200H20.200Q22.200 3.200 22.200 5.200V30.500H1.400Z" fill="#f3f3ee" stroke="#c9c9c4" stroke-width=".8"/><path d="M1.400 3.200H20.200Q22.200 3.200 22.200 5.200V10H1.400Z" fill="url(#gE)"/><path d="M6 10C6.500 7.500 8.500 5.500 11 5 C10 6.800 10 8.500 11 10Z" fill="#f3f8fb"/><g font-family="Liberation Serif,serif" font-size="5" fill="#b0b0aa"><text x="4" y="16.500">01010</text><text x="4" y="22">01101</text><text x="4" y="28">01110</text></g><g transform="translate(8 22.800) rotate(-44.700)"><path d="M0 0 6.500-2.900V2.900Z" fill="#000"/><rect x="6.500" y="-2.900" width="17.500" height="5.800" fill="#575954"/><rect x="21.300" y="-2.900" width="1" height="5.800" fill="#8d8f8a"/><rect x="24" y="-2.900" width="3.700" height="5.800" rx="1.500" fill="#575954"/></g></svg><span style="left:137px">Transmission Control Protocol (tcp), 20 bytes</span><div class="dot" style="left:2251px"></div><span style="left:2285px;letter-spacing:.65px">Packets: 5010 · Displayed: 5010 (100.0%)</span><div class="dot" style="left:3185px"></div><span style="left:3220px">Profile: Default</span></div>
</div>
</body></html>
